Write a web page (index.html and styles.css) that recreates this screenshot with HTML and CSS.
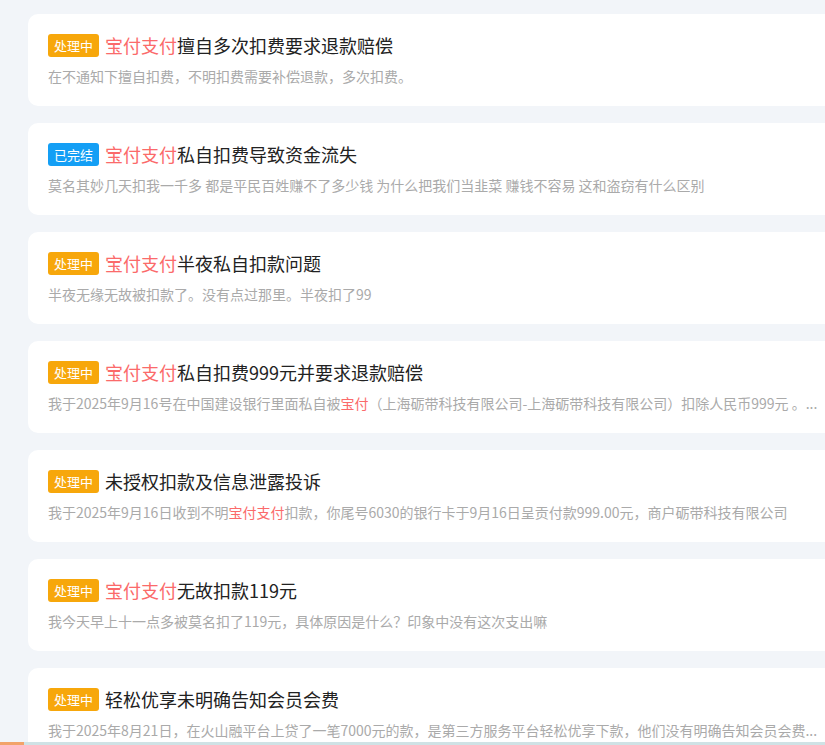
FILE: index.html
```html
<!DOCTYPE html>
<html lang="zh-CN">
<head>
<meta charset="utf-8">
<title>投诉列表</title>
<link rel="stylesheet" href="styles.css">
</head>
<body>
<div class="list">
  <div class="card">
    <div class="title"><span class="badge doing">处理中</span><span class="hl">宝付支付</span>擅自多次扣费要求退款赔偿</div>
    <div class="desc">在不通知下擅自扣费，不明扣费需要补偿退款，多次扣费。</div>
  </div>
  <div class="card">
    <div class="title"><span class="badge done">已完结</span><span class="hl">宝付支付</span>私自扣费导致资金流失</div>
    <div class="desc">莫名其妙几天扣我一千多 都是平民百姓赚不了多少钱 为什么把我们当韭菜 赚钱不容易 这和盗窃有什么区别</div>
  </div>
  <div class="card">
    <div class="title"><span class="badge doing">处理中</span><span class="hl">宝付支付</span>半夜私自扣款问题</div>
    <div class="desc">半夜无缘无故被扣款了。没有点过那里。半夜扣了99</div>
  </div>
  <div class="card">
    <div class="title"><span class="badge doing">处理中</span><span class="hl">宝付支付</span>私自扣费999元并要求退款赔偿</div>
    <div class="desc">我于2025年9月16号在中国建设银行里面私自被<span class="hl">宝付</span>（上海砺带科技有限公司-上海砺带科技有限公司）扣除人民币999元 。...</div>
  </div>
  <div class="card">
    <div class="title"><span class="badge doing">处理中</span>未授权扣款及信息泄露投诉</div>
    <div class="desc">我于2025年9月16日收到不明<span class="hl">宝付支付</span>扣款，你尾号6030的银行卡于9月16日呈贡付款999.00元，商户砺带科技有限公司</div>
  </div>
  <div class="card">
    <div class="title"><span class="badge doing">处理中</span><span class="hl">宝付支付</span>无故扣款119元</div>
    <div class="desc">我今天早上十一点多被莫名扣了119元，具体原因是什么？印象中没有这次支出嘛</div>
  </div>
  <div class="card">
    <div class="title"><span class="badge doing">处理中</span>轻松优享未明确告知会员会费</div>
    <div class="desc">我于2025年8月21日，在火山融平台上贷了一笔7000元的款，是第三方服务平台轻松优享下款，他们没有明确告知会员会费...</div>
  </div>
</div>
<div class="bottombar"><span class="seg"></span></div>
</body>
</html>
```
FILE: styles.css
```css
html, body {
  margin: 0;
  padding: 0;
  background: #f2f5f9;
  overflow: hidden;
  height: 745px;
}
body {
  font-family: "Noto Sans CJK SC", "Microsoft YaHei", sans-serif;
}
.list {
  display: flex;
  flex-direction: column;
  gap: 17px;
  padding: 14px 0 0 28px;
  width: 815px;
}
.card {
  background: #fff;
  border-radius: 10px;
  padding: 18px 20px 20px 20px;
  width: 815px;
  box-sizing: border-box;
}
.title {
  display: flex;
  align-items: center;
  height: 26px;
  font-size: 18px;
  color: #222;
  white-space: nowrap;
}
.badge {
  display: inline-flex;
  align-items: center;
  justify-content: center;
  height: 23px;
  padding: 0 6px;
  border-radius: 3px;
  font-size: 13px;
  color: #fff;
  margin-right: 6px;
}
.badge.doing { background: #f7a70b; }
.badge.done { background: #149ff5; }
.hl { color: #fb6a6a; }
.desc {
  margin-top: 8px;
  line-height: 20px;
  font-size: 14px;
  color: #aaaaaa;
  white-space: nowrap;
}
.bottombar {
  position: fixed;
  left: 0;
  right: 0;
  bottom: 0;
  height: 3px;
  background: #cfe2e5;
  display: flex;
}
.bottombar .seg {
  width: 24px;
  background: #f2a36a;
}
```
